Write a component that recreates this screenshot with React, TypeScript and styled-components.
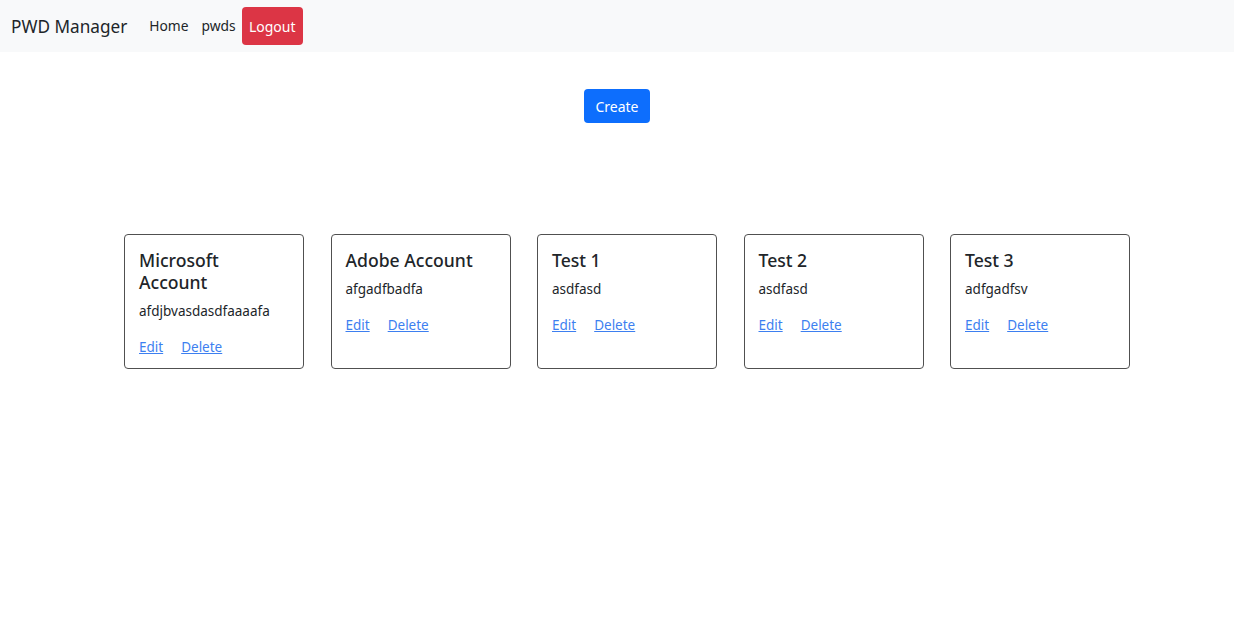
import React from "react";
import styled, { createGlobalStyle } from "styled-components";

const Global = createGlobalStyle`
  html, body { margin: 0; padding: 0; background: #fff; }
  body {
    font-family: "Noto Sans", "Open Sans", sans-serif;
    font-size: 15px;
    color: #212529;
  }
  * { box-sizing: border-box; }
`;

const Nav = styled.nav`
  height: 52px;
  background: #f8f9fa;
  display: flex;
  align-items: center;
  padding: 0 11px;
`;

const Brand = styled.a`
  font-size: 17.2px;
  color: #212529;
  text-decoration: none;
  margin-right: 22px;
  margin-top: 1px;
`;

const NavLink = styled.a<{ $gap: number }>`
  font-size: 13.8px;
  color: #212529;
  text-decoration: none;
  margin-right: ${(p) => p.$gap}px;
  margin-top: -2px;
`;

const DangerButton = styled.button`
  font-family: inherit;
  font-size: 14px;
  background: #dc3545;
  color: #fff;
  border: none;
  border-radius: 4px;
  height: 38px;
  width: 61px;
  padding: 0;
`;

const Main = styled.main`
  display: flex;
  flex-direction: column;
  align-items: center;
`;

const PrimaryButton = styled.button`
  font-family: inherit;
  font-size: 14px;
  background: #0d6efd;
  color: #fff;
  border: none;
  border-radius: 4px;
  height: 34px;
  padding: 0 11px;
  margin-top: 37px;
`;

const CardRow = styled.div`
  display: flex;
  justify-content: center;
  gap: 26.5px;
  padding-left: 20px;
  margin-top: 111px;
  width: 100%;
`;

const Card = styled.div`
  width: 180px;
  border: 1px solid #505050;
  border-radius: 4px;
  padding: 14px 14px 10px;
  min-height: 135px;
`;

const Title = styled.h5`
  margin: 0 0 7px;
  font-size: 17.6px;
  font-weight: 500;
  line-height: 22px;
  color: #212529;
`;

const Text = styled.p`
  margin: 0 0 14px;
  font-size: 13.5px;
  line-height: 22px;
  color: #212529;
`;

const Links = styled.div`
  display: flex;
  gap: 18px;
  line-height: 22px;
`;

const CardLink = styled.a`
  font-size: 13.5px;
  color: #3d7ff0;
  text-decoration: underline;
  cursor: pointer;
`;

const items = [
  { title: "Microsoft Account", text: "afdjbvasdasdfaaaafa" },
  { title: "Adobe Account", text: "afgadfbadfa" },
  { title: "Test 1", text: "asdfasd" },
  { title: "Test 2", text: "asdfasd" },
  { title: "Test 3", text: "adfgadfsv" },
];

export default function App() {
  return (
    <>
      <Global />
      <Nav>
        <Brand href="#">PWD Manager</Brand>
        <NavLink href="#" $gap={13}>Home</NavLink>
        <NavLink href="#" $gap={6}>pwds</NavLink>
        <DangerButton>Logout</DangerButton>
      </Nav>
      <Main>
        <PrimaryButton>Create</PrimaryButton>
        <CardRow>
          {items.map((it) => (
            <Card key={it.title}>
              <Title>{it.title}</Title>
              <Text>{it.text}</Text>
              <Links>
                <CardLink>Edit</CardLink>
                <CardLink>Delete</CardLink>
              </Links>
            </Card>
          ))}
        </CardRow>
      </Main>
    </>
  );
}
